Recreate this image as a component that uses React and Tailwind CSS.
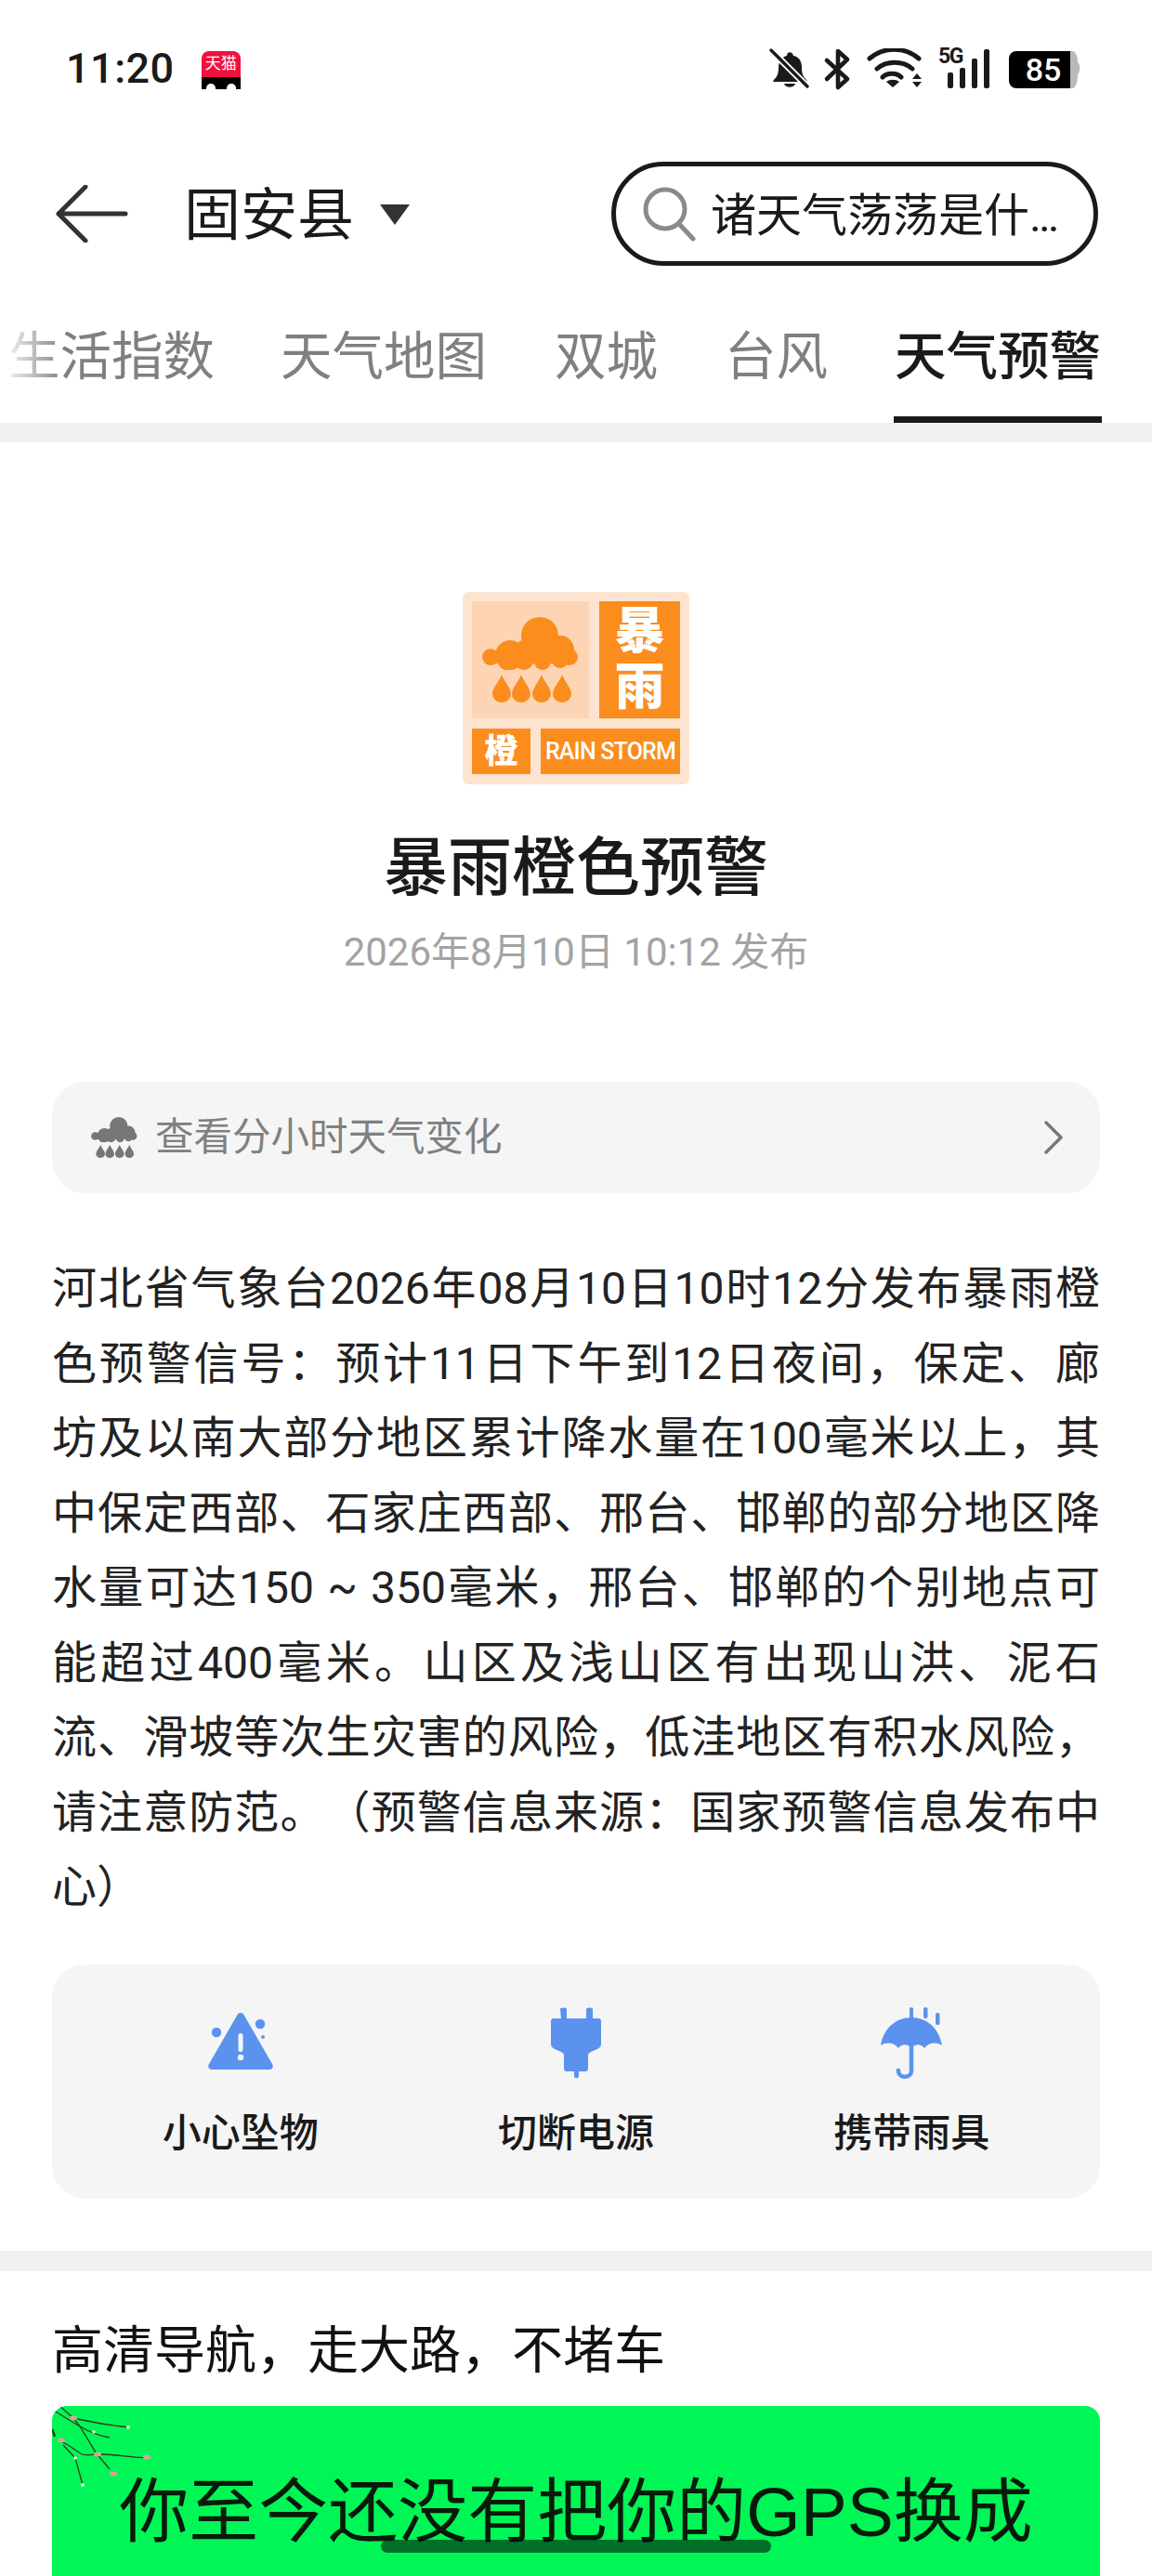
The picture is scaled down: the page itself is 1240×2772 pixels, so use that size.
import React from 'react';

const cjk = "font-['Roboto','Noto_Sans_CJK_SC',sans-serif]";

const tabs = [
    { label: '生活指数', cls: 'w-[218px] ml-[9px]' },
    { label: '天气地图', cls: 'w-[222px] ml-[75px]' },
    { label: '双城', cls: 'w-[110px] ml-[73px]' },
    { label: '台风', cls: 'w-[110px] ml-[73px]' },
];

const bodyLines = [
    '河北省气象台2026年08月10日10时12分发布暴雨橙',
    '色预警信号：预计11日下午到12日夜间，保定、廊',
    '坊及以南大部分地区累计降水量在100毫米以上，其',
    '中保定西部、石家庄西部、邢台、邯郸的部分地区降',
    '水量可达150 ~ 350毫米，邢台、邯郸的个别地点可',
    '能超过400毫米。山区及浅山区有出现山洪、泥石',
    '流、滑坡等次生灾害的风险，低洼地区有积水风险，',
    '请注意防范。（预警信息来源：国家预警信息发布中',
];

const StatusIcons = () => (
    <svg width="340" height="46" viewBox="0 0 340 46" className="block">
        {/* muted bell */}
        <path d="M7 34c3-3 5-6 5-13 0-7 4-12 9-13 0-5 6-5 7 0 6 1 9 6 9 13 0 7 2 10 5 13l1 2H6z" fill="#1a1a1a" />
        <path d="M18 38h12c-1 5-11 5-12 0z" fill="#1a1a1a" />
        <path d="M5 3l38 38" stroke="#fff" strokeWidth="7" />
        <path d="M4 2l39 39" stroke="#1a1a1a" strokeWidth="3.4" strokeLinecap="round" />
        {/* bluetooth */}
        <path d="M64 13l22 20-10 9V3l10 9-22 21" fill="none" stroke="#1a1a1a" strokeWidth="4.600" strokeLinejoin="round" strokeLinecap="round" />
        {/* wifi */}
        <path d="M110 11c15-13 38-13 53 0M118 22c10-9 28-9 38 0M124 31c5-5 15-5 20 0" fill="none" stroke="#1a1a1a" strokeWidth="5" strokeLinecap="round" />
        <path d="M135 42l-7-6c4-3 10-3 14 0z" fill="#1a1a1a" />
        <path d="M156 33l5-6 5 6zM156 36h10l-5 6z" fill="#1a1a1a" />
        {/* signal */}
        <rect x="194" y="26" width="6" height="17" rx="2" fill="#1a1a1a" />
        <rect x="207" y="21" width="6" height="22" rx="2" fill="#1a1a1a" />
        <rect x="220" y="11" width="6" height="32" rx="2" fill="#1a1a1a" />
        <rect x="233" y="1" width="6" height="42" rx="2" fill="#1a1a1a" />
        {/* battery tail */}
        <path d="M326 3h2c4 0 6 6 6 12 3 2 3 11 0 13 0 8-2 15-6 15h-2z" fill="#b9b9b9" />
    </svg>
);

const RainCloud = ({ className, fill }) => (
    <svg viewBox="0 0 104 92" className={className}>
        <g fill={fill}>
            <circle cx="62" cy="20" r="20" />
            <circle cx="9" cy="43" r="9" />
            <circle cx="30" cy="41" r="16" />
            <circle cx="47" cy="36" r="12" />
            <circle cx="84" cy="35" r="15" />
            <circle cx="94" cy="43" r="9" />
            <circle cx="26" cy="48" r="9" />
            <circle cx="45" cy="47" r="10" />
            <circle cx="65" cy="48" r="9" />
            <circle cx="84" cy="46" r="9" />
            <rect x="9" y="36" width="85" height="14" />
            <path d="M21 62c3 8 10 14 10 21a10 9 0 0 1-20 0c0-7 7-13 10-21z" />
            <path d="M42 62c3 8 10 14 10 21a10 9 0 0 1-20 0c0-7 7-13 10-21z" />
            <path d="M64 62c3 8 10 14 10 21a10 9 0 0 1-20 0c0-7 7-13 10-21z" />
            <path d="M86 62c3 8 10 14 10 21a10 9 0 0 1-20 0c0-7 7-13 10-21z" />
        </g>
    </svg>
);

const Signal = () => (
    <div className="mx-auto w-[244px] h-[207px] rounded-[6px] bg-[#fde4d0] p-[10px] flex flex-col gap-[11px]">
        <div className="flex gap-[11px] h-[126px]">
            <div className="w-[126px] bg-[#fdd5b4] flex items-center justify-center">
                <RainCloud className="w-[104px] h-[92px]" fill="#fb8c1e" />
            </div>
            <div className="flex-1 bg-[#fb8c1e] flex flex-col items-center justify-center text-white text-[54px] leading-[60px] font-black">
                <span>暴</span>
                <span>雨</span>
            </div>
        </div>
        <div className="flex gap-[11px] h-[49px]">
            <div className="w-[63px] bg-[#fb8c1e] flex items-center justify-center text-white text-[36px] font-black">橙</div>
            <div className="flex-1 bg-[#fb8c1e] flex items-center justify-center text-white text-[25px] leading-none font-medium tracking-[-0.8px] whitespace-nowrap">RAIN STORM</div>
        </div>
    </div>
);

const tips = [
    {
        label: '小心坠物',
        icon: (
            <svg width="72" height="72" viewBox="0 0 72 72">
                <path d="M36 3c2 0 3 1 4 3l30 52c2 3 0 6-3 6H5c-3 0-5-3-3-6L32 6c1-2 2-3 4-3z" fill="#5b92ee" />
                <rect x="33.500" y="25" width="5" height="20" rx="2.500" fill="#f5f5f5" />
                <circle cx="36" cy="51" r="3.200" fill="#f5f5f5" />
                <circle cx="10" cy="24" r="5.200" fill="#5b92ee" />
                <circle cx="57" cy="15" r="5.200" fill="#5b92ee" />
                <circle cx="60" cy="29" r="2" fill="#5b92ee" />
            </svg>
        ),
    },
    {
        label: '切断电源',
        icon: (
            <svg width="56" height="78" viewBox="0 0 56 78">
                <path d="M11 2c0-2 7-2 7 0v10h21V2c0-2 7-2 7 0v10h7c1 0 2 1 2 3v24c0 3-1 4-4 6l-7 3c-2 1-3 2-3 4v13c0 3-1 4-3 4h-7v5c0 3-5 3-5 0v-5h-8c-2 0-3-1-3-4V52c0-2-1-3-3-4l-7-3c-3-2-4-3-4-6V15c0-2 1-3 3-3h8z" fill="#5b92ee" />
            </svg>
        ),
    },
    {
        label: '携带雨具',
        icon: (
            <svg width="70" height="78" viewBox="0 0 70 78">
                <path d="M2 41C5 23 18 11 35 11s30 12 33 30c-7-4-14-3-19 3-4-5-10-5-14 0-4-5-10-5-14 0-5-6-12-7-19-3z" fill="#5b92ee" />
                <rect x="33" y="0" width="4" height="14" rx="2" fill="#5b92ee" />
                <rect x="48" y="0" width="4.500" height="12" rx="2" fill="#5b92ee" />
                <rect x="61" y="6" width="4.500" height="13" rx="2" fill="#5b92ee" />
                <path d="M35 42v26c0 9-14 9-14 0" fill="none" stroke="#5b92ee" strokeWidth="4.500" strokeLinecap="round" />
            </svg>
        ),
    },
];

const Branch = () => (
    <svg width="110" height="95" viewBox="0 0 110 95" className="absolute left-0 top-0">
        <g fill="none" stroke="#2e3a1c" strokeWidth="1.300">
            <path d="M8 0l15 13 7 9 17 28 15 18" />
            <path d="M27 14c18 4 36 7 55 9" />
            <path d="M2 5l28 17c10 6 20 10 32 12" />
            <path d="M8 37l9 5 15 10c6 2 12 0 18 0 18 0 34 3 52 4" />
            <path d="M12 42l13 14 8 29" />
            <path d="M0 25l3 8" strokeWidth="2.500" />
        </g>
        <g fill="#d9a394">
            <ellipse cx="23" cy="13" rx="4" ry="2.500" />
            <ellipse cx="10" cy="37" rx="4" ry="2.500" />
            <ellipse cx="49" cy="52" rx="4" ry="2.500" />
            <ellipse cx="102" cy="55" rx="4" ry="2.500" />
            <ellipse cx="66" cy="73" rx="4" ry="2.500" />
        </g>
        <g fill="#dff2d8">
            <circle cx="82" cy="23" r="2" />
            <circle cx="45" cy="28" r="1.800" />
            <circle cx="25" cy="56" r="1.800" />
            <circle cx="33" cy="85" r="2" />
        </g>
    </svg>
);

const App = () => {
    return (
        <div className={`relative w-[1240px] h-[2772px] overflow-hidden bg-white text-[#1a1a1a] ${cjk}`}>
            {/* Status bar */}
            <div className="h-[100px] pl-[71px] pr-[74px] pt-[50px] flex items-start justify-between">
                <div className="flex items-start">
                    <span className="text-[45px] leading-[48px] font-medium tracking-[0.5px]">11:20</span>
                    <div className="relative ml-[29px] mt-[5px] w-[42px] h-[41px] rounded-t-[8px] overflow-hidden bg-[#f0123c] flex justify-center">
                        <span className="text-white text-[17px] leading-[27px] whitespace-nowrap">天猫</span>
                        <div className="absolute left-0 right-0 bottom-0 h-[13px] bg-black" />
                        <div className="absolute left-[5px] bottom-[-4px] w-[10px] h-[10px] rounded-full bg-white" />
                        <div className="absolute right-[5px] bottom-[-4px] w-[10px] h-[10px] rounded-full bg-white" />
                    </div>
                </div>
                <div className="relative mt-[2px]">
                    <StatusIcons />
                    <span className="absolute left-[184px] top-[-3px] text-[23px] leading-[24px] font-bold tracking-[-1.5px]">5G</span>
                    <div className="absolute left-[260px] top-[3px] w-[66px] h-[40px] rounded-l-[8px] bg-black text-white text-[34px] leading-[40px] font-medium text-center pl-[8px]">85</div>
                </div>
            </div>

            {/* Header */}
            <div className="h-[110px] mt-[75px] pl-[60px] flex items-center">
                <svg width="78" height="62" viewBox="0 0 78 62">
                    <path d="M32 2L3 31l29 29M3 31h72" fill="none" stroke="#333" strokeWidth="5" strokeLinecap="round" strokeLinejoin="round" />
                </svg>
                <span className="ml-[60px] mt-[5px] text-[61px] leading-none">固安县</span>
                <svg width="32" height="22" viewBox="0 0 32 22" className="ml-[28px] mt-[2px]">
                    <path d="M0 0h32L16 22z" fill="#333" />
                </svg>
                <div className="ml-[217px] w-[524px] h-[112px] rounded-full border-[5px] border-[#1a1a1a] flex items-center pl-[28px]">
                    <svg width="60" height="60" viewBox="0 0 60 60">
                        <circle cx="25" cy="25" r="21" fill="none" stroke="#8a8a8a" strokeWidth="5" />
                        <path d="M40 41l15 16" stroke="#8a8a8a" strokeWidth="5" strokeLinecap="round" />
                    </svg>
                    <span className="ml-[14px] mt-[4px] text-[49px] leading-none whitespace-nowrap">诸天气荡荡是什<span className="tracking-[-3px]">...</span></span>
                </div>
            </div>

            {/* Tabs */}
            <div className="mt-[65px] h-[105px] flex items-start relative">
                {tabs.map((tab) => (
                    <span key={tab.label} className={`${tab.cls} shrink-0 text-[55.500px] leading-[70px] text-[#808080] whitespace-nowrap`}>{tab.label}</span>
                ))}
                <div className="ml-[72px] w-[224px] h-[105px] border-b-[7px] border-[#1a1a1a] text-[55.500px] leading-[70px] font-medium text-center whitespace-nowrap">天气预警</div>
                <div className="absolute left-0 top-0 w-[70px] h-[70px] bg-gradient-to-r from-white to-transparent" />
            </div>
            <div className="h-[21px] bg-[#eff0f2]" />

            {/* Warning head */}
            <div className="mt-[161px]">
                <Signal />
                <h1 className="mt-[52px] text-center text-[69px] leading-[78px] font-medium">暴雨橙色预警</h1>
                <p className="mt-[27px] text-center text-[42px] leading-[48px] text-[#a3a3a3]">2026年8月10日 10:12 发布</p>
            </div>

            {/* Minute forecast row */}
            <div className="mt-[115px] mx-[56px] h-[120px] rounded-[36px] bg-[#f5f5f5] flex items-center pl-[42px] pr-[39px]">
                <RainCloud className="w-[50px] h-[44px]" fill="#777777" />
                <span className="ml-[19px] text-[41.500px] leading-none text-[#808080]">查看分小时天气变化</span>
                <svg width="22" height="36" viewBox="0 0 22 36" className="ml-auto">
                    <path d="M3 2l16 16L3 34" fill="none" stroke="#777" strokeWidth="3.500" strokeLinecap="round" strokeLinejoin="round" />
                </svg>
            </div>

            {/* Body */}
            <div className="mt-[63px] mx-[56px] text-[48px] leading-[80.500px] text-[#222] [text-spacing-trim:space-all]">
                {bodyLines.map((line) => (
                    <p key={line} className="text-justify [text-align-last:justify]">{line}</p>
                ))}
                <p>心）</p>
            </div>

            {/* Tips */}
            <div className="mt-[42px] mx-[56px] h-[252px] rounded-[36px] bg-[#f5f5f5] grid grid-cols-3 pt-[45px] px-[22px]">
                {tips.map((tip) => (
                    <div key={tip.label} className="flex flex-col items-center">
                        <div className="h-[80px] flex items-center justify-center">{tip.icon}</div>
                        <span className="mt-[32px] text-[42px] leading-[50px] font-medium">{tip.label}</span>
                    </div>
                ))}
            </div>

            <div className="mt-[56px] h-[22px] bg-[#eff0f2]" />

            {/* Ad */}
            <h2 className="mt-[55px] mx-[56px] text-[55px] leading-[60px] text-[#111] [text-spacing-trim:space-all]">高清导航，走大路，不堵车</h2>
            <div className="relative mt-[30px] mx-[56px] h-[400px] rounded-t-[16px] overflow-hidden bg-[#00f657]">
                <Branch />
                <p className="pt-[57px] text-center text-[75px] leading-[114px] text-[#0a1a0a] font-['Liberation_Sans','Noto_Sans_CJK_SC',sans-serif]">你至今还没有把你的GPS换成</p>
            </div>

            {/* Home indicator */}
            <div className="absolute left-[410px] top-[2733px] w-[420px] h-[14px] rounded-full bg-black/55" />
        </div>
    );
};

export default App;
